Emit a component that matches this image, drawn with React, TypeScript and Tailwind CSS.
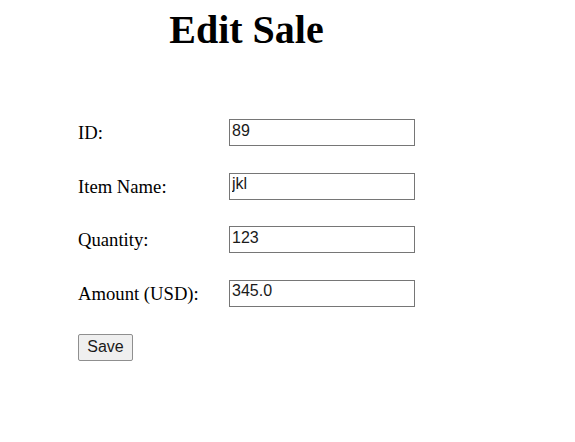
import React from "react";

export default function App() {
  const rows: [string, string][] = [
    ["ID:", "89"],
    ["Item Name:", "jkl"],
    ["Quantity:", "123"],
    ["Amount (USD):", "345.0"],
  ];
  return (
    <div className="min-h-[442px] w-[575px] bg-white text-black" style={{ fontFamily: '"Liberation Serif", serif' }}>
      <div className="ml-[78px] w-[337px]">
        <h1 className="pt-[10px] text-center text-[40px] font-bold leading-[40px]">Edit Sale</h1>
        <div className="mt-[69px] flex flex-col gap-[26.67px]">
          {rows.map(([label, value]) => (
            <div key={label} className="flex h-[27px] items-center">
              <span className="w-[151px] text-[18.67px] leading-[27px]">{label}</span>
              <input
                defaultValue={value}
                className="box-border h-[27px] w-[186px] border border-[#767676] bg-white px-[2px] pt-0 pb-[4px] text-[16px] text-[#1a1a1a] outline-none"
                style={{ fontFamily: '"Liberation Sans", Arial, sans-serif' }}
              />
            </div>
          ))}
          <div>
            <button
              className="box-border h-[27px] w-[55px] rounded-[2px] border border-[#8f8f8f] bg-[#efefef] text-[16px] leading-none text-[#1a1a1a]"
              style={{ fontFamily: '"Liberation Sans", Arial, sans-serif' }}
            >
              Save
            </button>
          </div>
        </div>
      </div>
    </div>
  );
}
